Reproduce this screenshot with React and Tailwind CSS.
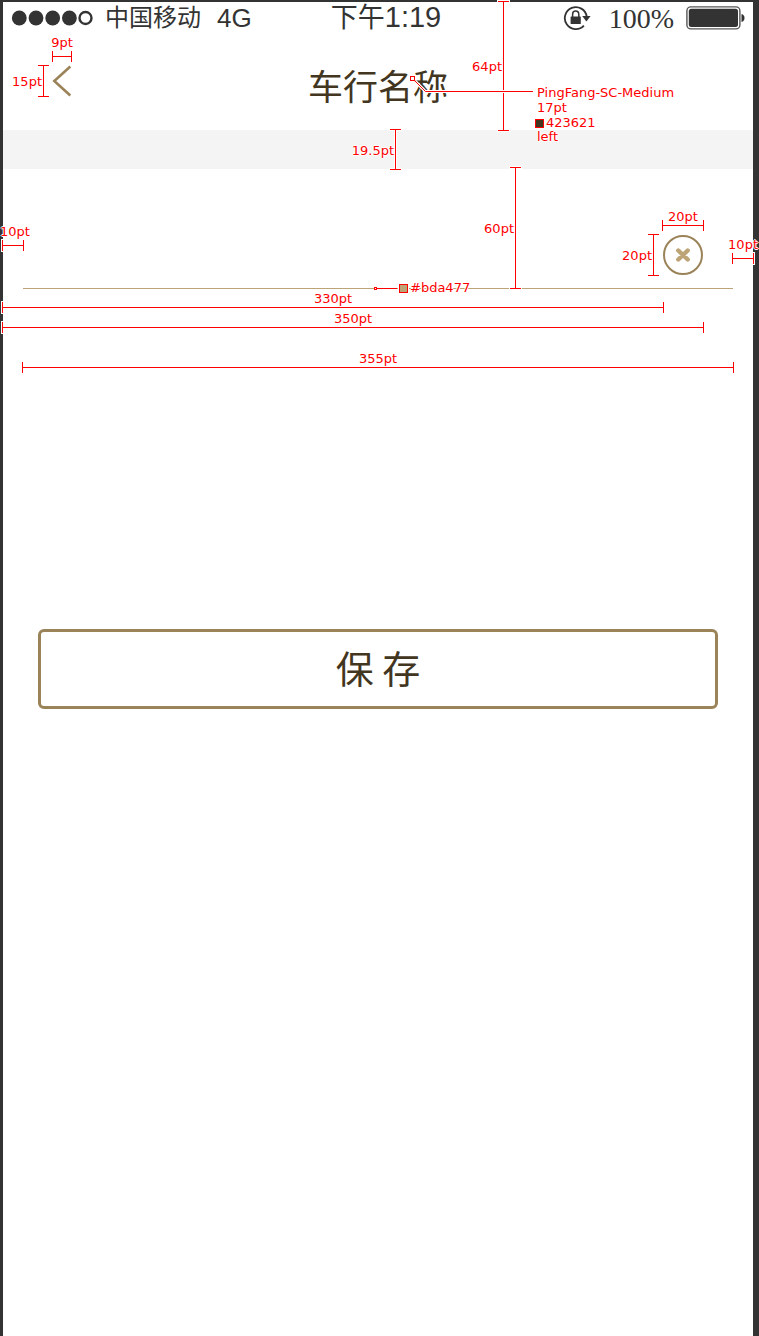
function HMeasure({ className, label, labelClass = "inset-x-0 bottom-[6px] justify-center" }) {
  return (
    <div className={"absolute flex h-[11px] items-center " + className}>
      <span className="h-px flex-1 bg-[#ff0000] shadow-[0_0_0_1px_white]" />
      <span className="absolute inset-y-0 left-0 w-px bg-[#ff0000] shadow-[0_0_0_1px_white]" />
      <span className="absolute inset-y-0 right-0 w-px bg-[#ff0000] shadow-[0_0_0_1px_white]" />
      <span className="absolute inset-x-0 top-[5px] h-px bg-[#ff0000]" />
      <span className={"absolute flex whitespace-nowrap " + labelClass}>{label}</span>
    </div>
  );
}

function VMeasure({ className, label }) {
  return (
    <div className={"absolute flex w-[11px] justify-center " + className}>
      <span className="w-px bg-[#ff0000] shadow-[0_0_0_1px_white]" />
      <span className="absolute inset-x-0 top-0 h-px bg-[#ff0000] shadow-[0_0_0_1px_white]" />
      <span className="absolute inset-x-0 bottom-0 h-px bg-[#ff0000] shadow-[0_0_0_1px_white]" />
      <span className="absolute inset-y-0 left-[5px] w-px bg-[#ff0000]" />
      <span className="absolute inset-y-0 right-[7px] flex items-center whitespace-nowrap pt-0.5">
        {label}
      </span>
    </div>
  );
}

function Annotations() {
  return (
    <div className="pointer-events-none absolute inset-0 overflow-hidden font-['Verdana','DejaVu_Sans',sans-serif] text-[13px] leading-4 text-[#ff0000] [text-shadow:1px_0_white,-1px_0_white,0_1px_white,0_-1px_white]">
      <HMeasure className="left-[52px] top-[51px] w-5" label="9pt" labelClass="inset-x-0 bottom-[11px] justify-center" />
      <HMeasure className="left-[2px] top-[240px] w-[22px]" label="10pt" labelClass="-left-0.5 bottom-[11px]" />
      <HMeasure className="left-[662px] top-[220px] w-[42px]" label="20pt" />
      <HMeasure className="left-[732px] top-[253px] w-[22px]" label="10pt" labelClass="-right-1 bottom-[11px]" />
      <HMeasure className="left-[2px] top-[302px] w-[662px]" label="330pt" />
      <HMeasure className="left-[2px] top-[322px] w-[702px]" label="350pt" />
      <HMeasure className="left-[22px] top-[362px] w-[712px]" label="355pt" />

      <VMeasure className="left-[38px] top-[65px] h-8" label="15pt" />
      <VMeasure className="left-[498px] top-[1px] h-[130px]" label="64pt" />
      <VMeasure className="left-[390px] top-[129px] h-[41px]" label="19.5pt" />
      <VMeasure className="left-[510px] top-[167px] h-[122px]" label="60pt" />
      <VMeasure className="left-[648px] top-[234px] h-[42px]" label="20pt" />

      <svg className="absolute left-[408px] top-[74px]" width="126" height="20" fill="none">
        <path d="M7 7L17.5 17.5H125" stroke="#fff" strokeWidth="3" />
        <path d="M7 7L17.5 17.5H125" stroke="#f00" />
        <rect x="2.5" y="2.5" width="4" height="4" fill="#fff" stroke="#f00" />
      </svg>
      <div className="absolute left-[535px] top-[85px] flex flex-col items-start leading-[15px]">
        <span className="pl-0.5">PingFang-SC-Medium</span>
        <span className="pl-0.5">17pt</span>
        <span className="flex items-center gap-0.5 leading-4">
          <i className="size-[9px] border border-[#ff0000] bg-[#423621]" />
          423621
        </span>
        <span className="pl-0.5 leading-3">left</span>
      </div>

      <div className="absolute left-[374px] top-[280px] flex items-center">
        <i className="size-[3px] border border-[#ff0000] bg-white" />
        <i className="h-px w-5 bg-[#ff0000]" />
        <i className="ml-0.5 mr-0.5 size-[9px] border border-[#ff0000] bg-[#bda477] shadow-[0_0_0_1px_white]" />
        #bda477
      </div>
    </div>
  );
}

function StatusBar() {
  return (
    <div className="flex h-8 items-center justify-between px-2 font-['Liberation_Sans','Noto_Sans_CJK_SC',sans-serif] text-[#333333]">
      <div className="flex flex-1 items-center">
        <svg width="84" height="16" fill="#333" aria-label="信号">
          <circle cx="8.3" cy="8" r="7.4" />
          <circle cx="25" cy="8" r="7.4" />
          <circle cx="41.7" cy="8" r="7.4" />
          <circle cx="58.4" cy="8" r="7.4" />
          <circle cx="74.5" cy="8" r="6" fill="none" stroke="#333" strokeWidth="2.4" />
        </svg>
        <span className="ml-2.5 text-2xl">中国移动</span>
        <span className="ml-4 text-[26px]">4G</span>
      </div>
      <div className="flex items-center pl-4">
        <span className="text-[27px]">下午</span>
        <span className="text-[29px]">1:19</span>
      </div>
      <div className="flex flex-1 items-center justify-end">
        <svg width="28" height="26" viewBox="0 0 28 26" fill="none" aria-label="方向锁定">
          <path d="M20.9 20.6A11 11 0 1 1 23.7 11.5" stroke="#333" strokeWidth="1.8" />
          <path d="M19.2 11H27.6L23.4 16.6Z" fill="#333" />
          <rect x="7.6" y="11.5" width="10.2" height="7.6" rx="0.6" fill="#333" />
          <path d="M9.6 12V9.2A3.1 3.1 0 0 1 15.8 9.2V12" stroke="#333" strokeWidth="1.5" />
        </svg>
        <span className="ml-[18px] pt-0.5 font-['Liberation_Serif',serif] text-[28px]">100%</span>
        <svg className="ml-3" width="59" height="24" viewBox="0 0 59 24" fill="none" aria-label="电池">
          <rect x="0.9" y="0.9" width="53" height="22" rx="4" stroke="#555" strokeWidth="1.4" />
          <rect x="2.8" y="2.8" width="49.2" height="18.2" rx="2.5" fill="#333" />
          <path d="M55.5 8C59.5 8.5 59.5 15.5 55.5 16Z" fill="#333" />
        </svg>
      </div>
    </div>
  );
}

export default function App() {
  return (
    <div className="relative flex min-h-screen flex-col border-l-[3px] border-r-[6px] border-t-2 border-[#333333] bg-white font-['Noto_Sans_CJK_SC',sans-serif] text-[#423621]">
      <StatusBar />
      <header className="flex h-24 items-start justify-between px-[49px] pt-[27px]">
        <button type="button" aria-label="返回" className="flex h-10 w-5 items-center">
          <svg width="20" height="32" fill="none">
            <path d="M18.3 1.5L2.3 16L18.3 30.5" stroke="#9b8359" strokeWidth="2.6" />
          </svg>
        </button>
        <h1 className="text-[35px] leading-[48px]">车行名称</h1>
        <span className="w-5" />
      </header>
      <div className="h-[39px] bg-[#f4f4f4]" />
      <form className="flex flex-col">
        <div className="mx-5 flex h-[120px] items-end border-b border-[#bda477] pb-[13px] pr-[30px]">
          <input
            type="text"
            aria-label="车行名称"
            className="h-10 min-w-0 flex-1 bg-transparent text-3xl outline-none"
          />
          <button type="button" aria-label="清除">
            <svg width="40" height="40" fill="none">
              <circle cx="20" cy="20" r="19" stroke="#9b8359" strokeWidth="2" />
              <path d="M15.3 15.5L24.7 24.5M24.7 15.5L15.3 24.5" stroke="#bda477" strokeWidth="4.4" strokeLinecap="round" />
            </svg>
          </button>
        </div>
        <button
          type="submit"
          className="mx-[35px] mt-[340px] flex h-20 items-center justify-center rounded-md border-[3px] border-[#9b8359] pb-1.5 text-[38px]"
        >
          保 存
        </button>
      </form>
      <div className="absolute -left-[3px] -right-[6px] -top-0.5 bottom-0">
        <Annotations />
      </div>
    </div>
  );
}
